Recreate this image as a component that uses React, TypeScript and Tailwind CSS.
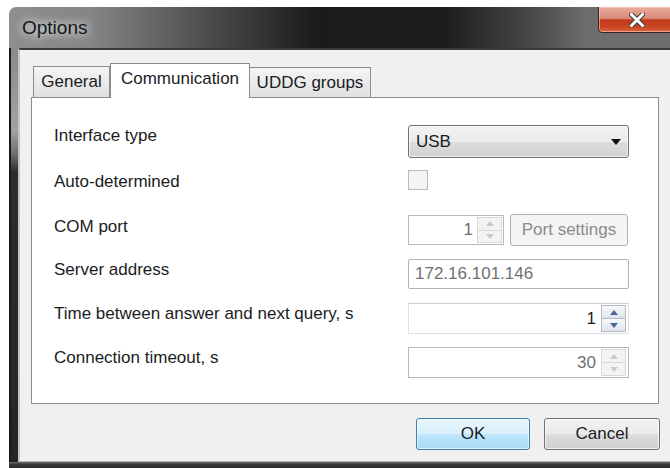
import React from "react";

type Dir = "up" | "down";

function Tri({ dir, color }: { dir: Dir; color: string }) {
  return (
    <svg width="8" height="5" viewBox="0 0 8 5">
      <path d={dir === "up" ? "M0 5 L4 0 L8 5 Z" : "M0 0 L8 0 L4 5 Z"} fill={color} />
    </svg>
  );
}

function SpinButtons({ enabled }: { enabled: boolean }) {
  const arrow = enabled ? "#4b6791" : "#c6c9cd";
  const btn = enabled
    ? "border-[#b3bac4] bg-gradient-to-b from-[#f7f9fb] to-[#dfe5ec]"
    : "border-[#d6d8db] bg-[#f3f3f3]";
  return (
    <div className="flex h-full w-[25px] flex-col py-[1px]">
      <div className={`flex flex-1 items-center justify-center border ${btn}`}>
        <Tri dir="up" color={arrow} />
      </div>
      <div className={`flex flex-1 items-center justify-center border border-t-0 ${btn}`}>
        <Tri dir="down" color={arrow} />
      </div>
    </div>
  );
}

function Label({ text, top }: { text: string; top: string }) {
  return <div className={`leading-[20px] text-[#1a1c22] ${top}`}>{text}</div>;
}

export default function App() {
  return (
    <div className="flex h-[468px] w-[670px] items-start overflow-hidden bg-white pl-[9px] pt-[7px] text-[17px] [font-family:'Liberation_Sans',Arial,sans-serif]">
      <div className="flex h-[461px] w-[680px] shrink-0 flex-col overflow-hidden rounded-tl-[7px]">
        {/* title bar */}
        <div className="relative flex h-[41px] shrink-0 items-center bg-[linear-gradient(90deg,#8e8e8e_0%,#858585_12%,#4a4a4a_30%,#1b1b1b_45%,#1d1d1d_64%,#454545_76%,#6d6d6d_85%,#6e6e6e_100%)]">
          <div className="pl-[13px] pt-[1px] text-[19px] text-[#101820] [text-shadow:0_0_8px_rgba(255,255,255,0.9),0_0_14px_rgba(255,255,255,0.6)]">
            Options
          </div>
          <div className="absolute left-[589px] top-[-1px] flex h-[27px] w-[78px] items-center justify-center rounded-b-[4px] border border-[#3a2420] bg-[linear-gradient(180deg,#e8ab9c_0%,#d88a78_45%,#c23a1a_52%,#c9451f_80%,#dc6a45_100%)] shadow-[inset_0_0_0_1px_rgba(255,220,210,0.5)]">
            <svg width="16" height="14" viewBox="0 0 16 14">
              <path
                d="M2 1 L8 7 M14 1 L8 7 M2 13 L8 7 M14 13 L8 7"
                stroke="#3a3a3a"
                strokeWidth="5"
                strokeLinecap="square"
              />
              <path
                d="M2.5 1.5 L8 7 M13.5 1.5 L8 7 M2.5 12.5 L8 7 M13.5 12.5 L8 7"
                stroke="#ffffff"
                strokeWidth="3"
                strokeLinecap="square"
              />
            </svg>
          </div>
        </div>

        {/* frame + client */}
        <div className="flex flex-1">
          <div className="w-[9px] shrink-0 bg-[linear-gradient(180deg,#8a8a8a_0%,#a2a2a2_20%,#6a6a6a_26%,#2c2c2c_30%,#262626_100%)] shadow-[inset_2px_0_0_#1a1a1a]" />
          <div className="flex flex-1 flex-col border-b border-l-2 border-t-2 border-b-[#b8b8b8] border-l-[#c4c4c4] border-t-[#3a3a3a] bg-[#f0f0f0] pl-[11px] pt-[13px]">
            {/* tabs */}
            <div className="relative z-10 ml-[2px] flex h-[34px] items-end">
              <div className="flex h-[31px] w-[77px] items-center justify-center border border-b-0 border-[#898c95] bg-gradient-to-b from-[#f4f4f4] to-[#e1e1e1] text-[#1a1c22]">
                General
              </div>
              <div className="-mb-px flex h-[35px] w-[140px] items-center justify-center border border-b-0 border-[#898c95] bg-white pb-[4px] text-[#1a1c22]">
                Communication
              </div>
              <div className="flex h-[30px] w-[121px] items-center justify-center border border-b-0 border-l-0 border-[#898c95] bg-gradient-to-b from-[#f4f4f4] to-[#e1e1e1] text-[#1a1c22]">
                UDDG groups
              </div>
            </div>

            {/* tab page */}
            <div className="flex h-[307px] w-[628px] flex-col border border-[#898c95] bg-white pl-[22px] pr-[29px] pt-[27px]">
              {/* Interface type */}
              <div className="flex h-[33px] items-start justify-between">
                <Label text="Interface type" top="pt-[1px]" />
                <div className="flex h-[33px] w-[221px] items-center justify-between rounded-[3px] border border-[#707070] bg-[linear-gradient(180deg,#f3f3f3_0%,#ebebeb_50%,#dddddd_52%,#d0d0d0_100%)] pl-[7px] pr-[7px] text-[#1a1c22] shadow-[inset_0_0_0_1px_rgba(255,255,255,0.7)]">
                  <span>USB</span>
                  <svg width="10" height="6" viewBox="0 0 10 6">
                    <path d="M0 0 L10 0 L5 6 Z" fill="#111111" />
                  </svg>
                </div>
              </div>

              {/* Auto-determined */}
              <div className="mt-[12px] flex h-[20px] items-start justify-between">
                <Label text="Auto-determined" top="pt-[2px]" />
                <div className="w-[221px]">
                  <div className="h-[20px] w-[20px] border border-[#b9b9b9] bg-[#f4f4f4]" />
                </div>
              </div>

              {/* COM port */}
              <div className="mt-[24px] flex h-[32px] items-start justify-between">
                <Label text="COM port" top="pt-[3px]" />
                <div className="flex w-[221px] items-center">
                  <div className="flex h-[30px] w-[96px] items-center border border-[#b5b9bd] bg-white pr-[1px]">
                    <div className="flex-1 pr-[4px] text-right text-[#6f6f6f]">1</div>
                    <SpinButtons enabled={false} />
                  </div>
                  <div className="ml-[6px] flex h-[32px] w-[118px] items-center justify-center rounded-[3px] border border-[#adb2b5] bg-[#f4f4f4] text-[#8a8a8a]">
                    Port settings
                  </div>
                </div>
              </div>

              {/* Server address */}
              <div className="mt-[13px] flex h-[30px] items-start justify-between">
                <Label text="Server address" top="pt-[1px]" />
                <div className="flex h-[30px] w-[221px] items-center rounded-[2px] border border-[#b0b3b7] bg-white pl-[6px] text-[#6f6f6f]">
                  172.16.101.146
                </div>
              </div>

              {/* Time between answer and next query */}
              <div className="mt-[14px] flex h-[31px] items-start justify-between">
                <Label text="Time between answer and next query, s" top="pt-[1px]" />
                <div className="flex h-[31px] w-[221px] items-center border border-[#dbe0e6] border-t-[#c9ced4] bg-white pr-[2px]">
                  <div className="flex-1 pr-[5px] text-right text-[#1a1c22]">1</div>
                  <SpinButtons enabled={true} />
                </div>
              </div>

              {/* Connection timeout */}
              <div className="mt-[13px] flex h-[31px] items-start justify-between">
                <Label text="Connection timeout, s" top="pt-[1px]" />
                <div className="flex h-[31px] w-[221px] items-center border border-[#b5b9bd] bg-white pr-[2px]">
                  <div className="flex-1 pr-[5px] text-right text-[#6f6f6f]">30</div>
                  <SpinButtons enabled={false} />
                </div>
              </div>
            </div>

            {/* dialog buttons */}
            <div className="ml-[385px] mt-[14px] flex gap-[14px]">
              <div className="flex h-[32px] w-[114px] items-center justify-center rounded-[3px] border border-[#3c7fb1] bg-[linear-gradient(180deg,#eaf6fd_0%,#d9f0fc_50%,#bee6fd_52%,#a7d9f5_100%)] text-[#1a1c22] shadow-[inset_0_0_0_1px_rgba(255,255,255,0.6)]">
                OK
              </div>
              <div className="flex h-[32px] w-[116px] items-center justify-center rounded-[3px] border border-[#707070] bg-[linear-gradient(180deg,#f3f3f3_0%,#ebebeb_50%,#dddddd_52%,#cfcfcf_100%)] text-[#1a1c22] shadow-[inset_0_0_0_1px_rgba(255,255,255,0.7)]">
                Cancel
              </div>
            </div>
          </div>
        </div>

        {/* bottom frame */}
        <div className="h-[6px] shrink-0 bg-[linear-gradient(180deg,#6a6a6a_0%,#3a3a3a_40%,#2a2a2a_100%)]" />
      </div>
    </div>
  );
}
